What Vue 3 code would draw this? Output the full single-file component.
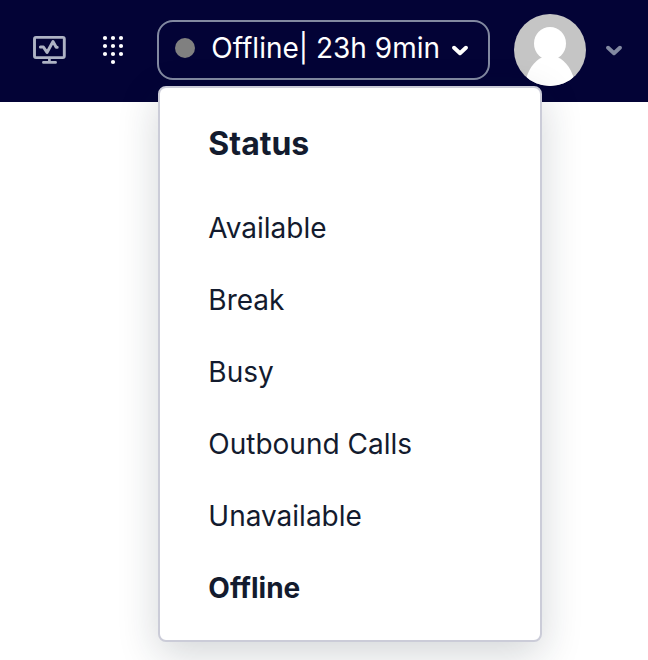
<script setup>
import { ref } from 'vue'

const statuses = ['Available', 'Break', 'Busy', 'Outbound Calls', 'Unavailable', 'Offline']
const current = ref('Offline')
const open = ref(true)

function choose(status) {
  current.value = status
}
</script>

<template>
  <div class="page">
    <header class="topbar">
      <button class="icon-button" type="button" aria-label="Monitoring">
        <svg class="monitor" width="36" height="30" viewBox="0 0 36 30" fill="none" stroke="currentColor" stroke-linecap="round" stroke-linejoin="round">
          <rect x="1.5" y="2.4" width="29.8" height="20.2" rx="1.5" stroke-width="2.9" />
          <path d="M16.4 23v4M10.4 27.4h12.2" stroke-width="2.7" />
          <path d="M7.4 12h3l3.6 5.4 6-10.8 3.2 5.6h1" stroke-width="3" />
        </svg>
      </button>

      <button class="icon-button" type="button" aria-label="Dialpad">
        <svg class="dialpad" width="24" height="30" viewBox="0 0 24 30" fill="currentColor">
          <circle cx="4" cy="3" r="2.1" /><circle cx="12" cy="3" r="2.1" /><circle cx="20" cy="3" r="2.1" />
          <circle cx="4" cy="11" r="2.1" /><circle cx="12" cy="11" r="2.1" /><circle cx="20" cy="11" r="2.1" />
          <circle cx="4" cy="19" r="2.1" /><circle cx="12" cy="19" r="2.1" /><circle cx="20" cy="19" r="2.1" />
          <circle cx="12" cy="27" r="2.1" />
        </svg>
      </button>

      <div class="status">
        <button class="status-toggle" type="button" :aria-expanded="open" @click="open = !open">
          <span class="dot"></span>
          <span class="status-text">{{ current }}| 23h 9min</span>
          <svg width="16" height="12" viewBox="0 0 16 12" fill="none" stroke="currentColor" stroke-width="3.9" stroke-linecap="round" stroke-linejoin="round">
            <path d="M2.1 3.7l5.9 5.5 5.9-5.5" />
          </svg>
        </button>

        <div v-if="open" class="menu">
          <h2 class="menu-title">Status</h2>
          <ul class="menu-list">
            <li v-for="status in statuses" :key="status">
              <button
                class="menu-item"
                :class="{ selected: status === current }"
                type="button"
                @click="choose(status)"
              >{{ status }}</button>
            </li>
          </ul>
        </div>
      </div>

      <button class="account" type="button" aria-label="Account">
        <svg width="72" height="72" viewBox="0 0 72 72">
          <defs>
            <clipPath id="avatar-clip"><circle cx="36" cy="36" r="36" /></clipPath>
          </defs>
          <g clip-path="url(#avatar-clip)">
            <rect width="72" height="72" fill="#c5c5c5" />
            <ellipse cx="36" cy="29.5" rx="16" ry="16.5" fill="#fff" />
            <path d="M11 72C12 57 21 46 28 43.5h16C51 46 60 57 61 72z" fill="#fff" />
          </g>
        </svg>
        <svg class="muted" width="16" height="12" viewBox="0 0 16 12" fill="none" stroke="currentColor" stroke-width="3.9" stroke-linecap="round" stroke-linejoin="round">
          <path d="M2.1 3.7l5.9 5.5 5.9-5.5" />
        </svg>
      </button>
    </header>
  </div>
</template>

<style>
body {
  background: #fff;
}
</style>

<style scoped>
.page {
  min-height: 100vh;
  overflow: hidden;
  font-family: Inter, "Liberation Sans", sans-serif;
}

.topbar {
  display: flex;
  align-items: center;
  justify-content: flex-end;
  box-sizing: border-box;
  padding: 14px 26px 16px;
  background: #030336;
}

button {
  margin: 0;
  padding: 0;
  border: 0;
  background: none;
  color: inherit;
  font: inherit;
  cursor: pointer;
}

svg {
  display: block;
  flex: none;
}

.icon-button {
  margin-right: 32px;
}

.monitor {
  color: #aeb3c4;
}

.dialpad {
  color: #fff;
}

.status {
  position: relative;
  margin-right: 24px;
}

.status-toggle {
  display: flex;
  align-items: center;
  box-sizing: border-box;
  height: 60px;
  padding: 0 20px 0 16px;
  border: 2px solid #8289a1;
  border-radius: 16px;
  color: #fff;
}

.dot {
  width: 20px;
  height: 20px;
  margin-bottom: 4px;
  border-radius: 50%;
  background: #808080;
}

.status-text {
  margin: 0 12px 4px 16px;
  font-size: 28px;
  line-height: 36px;
  white-space: nowrap;
}

.menu {
  position: absolute;
  z-index: 1;
  top: 66px;
  left: 1px;
  box-sizing: border-box;
  width: 384px;
  padding: 16px 0;
  border: 2px solid #cbccd8;
  border-radius: 8px;
  background: #fff;
  box-shadow: 0 12px 40px rgba(19, 35, 46, 0.19);
  color: #131b2e;
}

.menu-title {
  margin: 0 0 8px;
  padding: 0 48px;
  font-size: 32px;
  font-weight: 700;
  line-height: 80px;
}

.menu-list {
  margin: 0;
  padding: 0;
  list-style: none;
}

.menu-item {
  display: block;
  width: 100%;
  padding: 0 48px;
  font-size: 28px;
  line-height: 72px;
  text-align: left;
}

.menu-item.selected {
  font-weight: 700;
}

.account {
  display: flex;
  align-items: center;
  gap: 20px;
}

.muted {
  color: #8289a1;
}
</style>
